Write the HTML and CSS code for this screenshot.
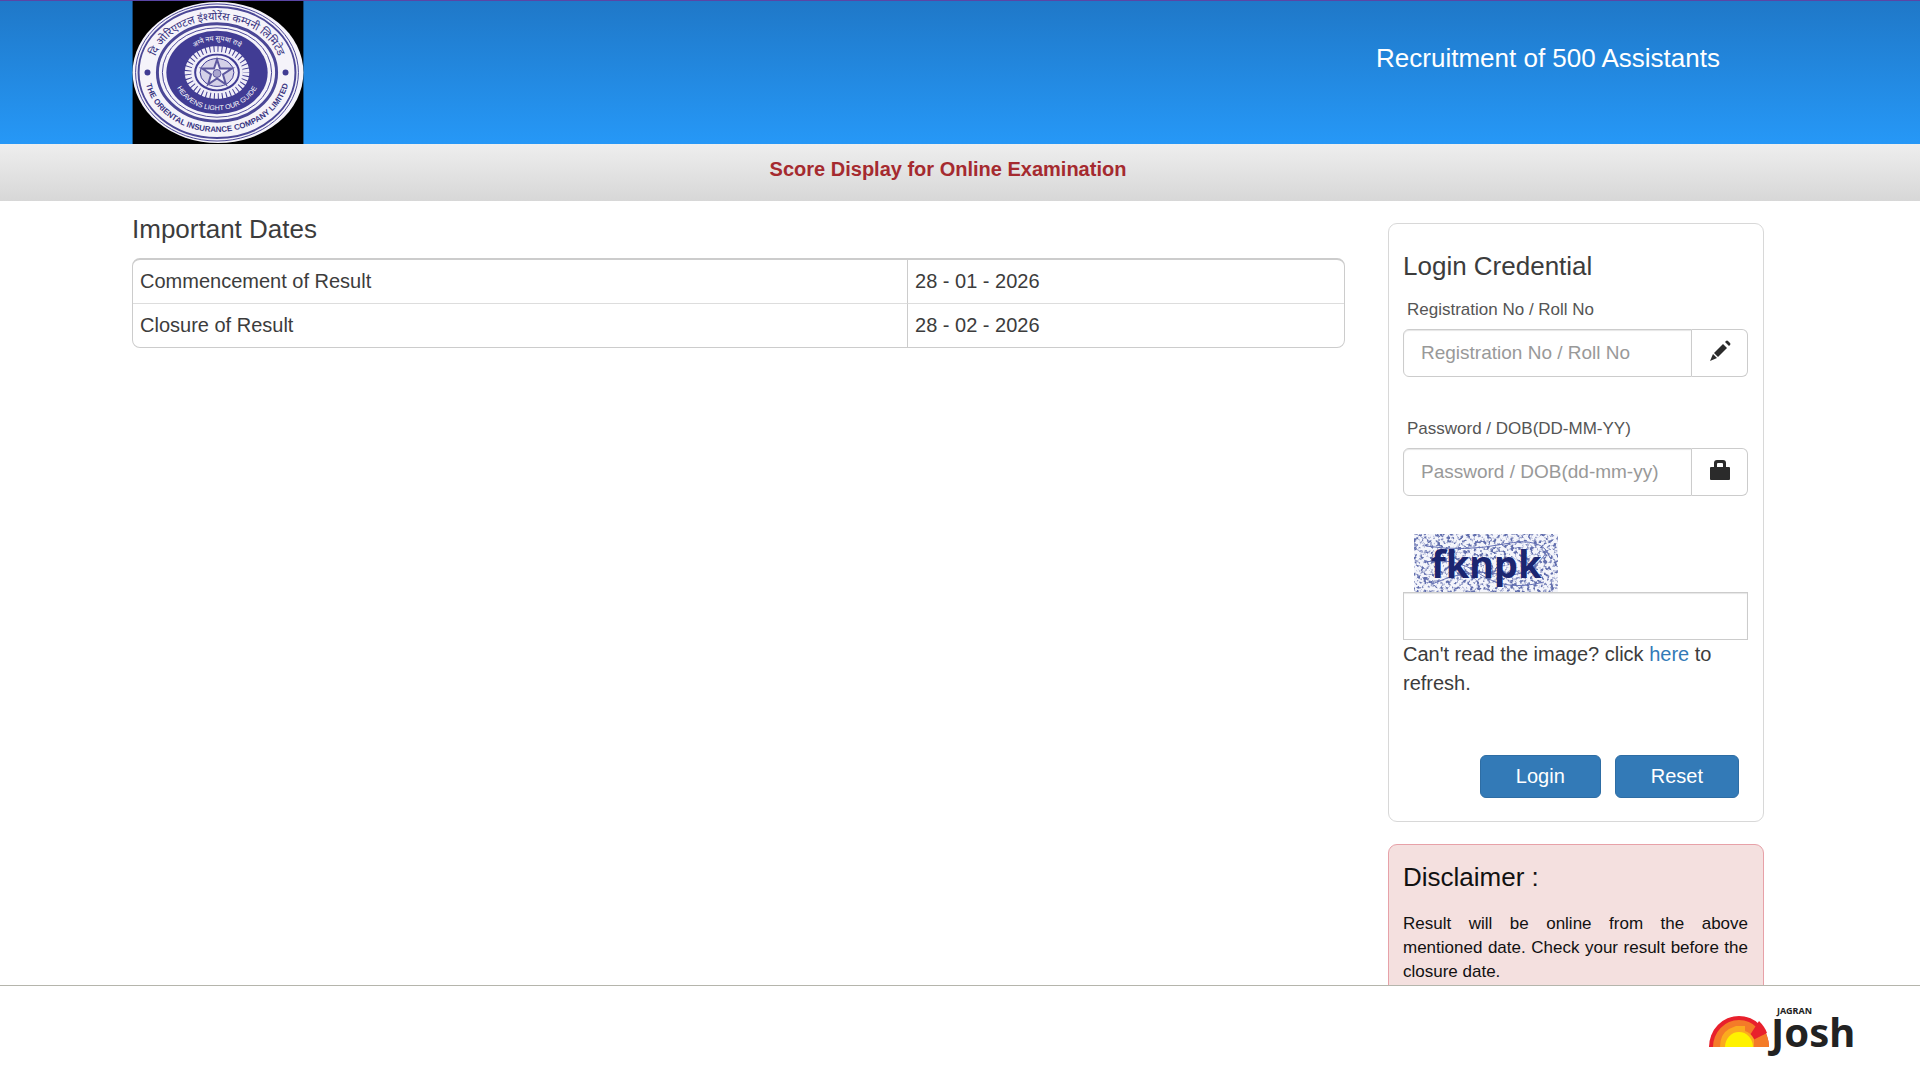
FILE: index.html
```
<!DOCTYPE html>
<html lang="en">

<head>
    <meta charset="utf-8">
    <title>Score Display for Online Examination</title>
    <link rel="stylesheet" href="styles.css">
</head>

<body>
    <header class="banner">
        <svg class="emblem" viewBox="0 0 172 144" role="img" aria-label="The Oriental Insurance Company Limited">
            <defs>
                <path id="arc-hindi" d="M20 72 A65 53 0 0 1 150 72" />
                <path id="arc-name" d="M12 72 A73 60 0 0 0 158 72" />
                <path id="arc-motto" d="M48 72 A37 32 0 0 1 122 72" />
                <path id="arc-guide" d="M41 72 A44 38 0 0 0 129 72" />
            </defs>
            <rect width="172" height="144" fill="#000" />
            <ellipse cx="86" cy="72" rx="86" ry="71" fill="#f5f3fa" />
            <g fill="none" stroke="#4b4796">
                <ellipse cx="85" cy="72" rx="82" ry="69" stroke-width="1" />
                <ellipse cx="85" cy="72" rx="79" ry="66" stroke-width="2" />
                <ellipse cx="85" cy="72" rx="60" ry="49" stroke-width="3" />
                <ellipse cx="85" cy="72" rx="55" ry="45" stroke-width="1" />
            </g>
            <ellipse cx="85" cy="72" rx="51" ry="42" fill="#413c94" />
            <ellipse cx="85" cy="72" rx="29" ry="23" fill="none" stroke="#f0eef8" stroke-width="7" stroke-dasharray="3 1" />
            <ellipse cx="85" cy="72" rx="26" ry="21" fill="#f0eef8" />
            <ellipse cx="85" cy="72" rx="22" ry="18" fill="none" stroke="#413c94" stroke-width="2" />
            <ellipse cx="85" cy="72" rx="17" ry="14" fill="#d5d1e8" stroke="#413c94" />
            <path d="M85 59 L88 68 L100 68 L91 74 L94 84 L85 78 L76 84 L79 74 L70 68 L82 68 Z" fill="#f0eef8" stroke="#5d589f" stroke-width="2" />
            <circle cx="85" cy="73" r="4" fill="#aaa6cf" stroke="#5d589f" />
            <circle cx="15" cy="72" r="3" fill="#413c94" />
            <circle cx="154" cy="72" r="3" fill="#413c94" />
            <text class="seal-hindi"><textPath href="#arc-hindi" startOffset="50%">दि ओरिएण्टल इंश्योरेंस कम्पनी लिमिटेड</textPath></text>
            <text class="seal-name"><textPath href="#arc-name" startOffset="50%">THE ORIENTAL INSURANCE COMPANY LIMITED</textPath></text>
            <text class="seal-motto"><textPath href="#arc-motto" startOffset="50%">अग्ने नय सुपथा राये</textPath></text>
            <text class="seal-guide"><textPath href="#arc-guide" startOffset="50%">HEAVENS LIGHT OUR GUIDE</textPath></text>
        </svg>
        <h1>Recruitment of 500 Assistants</h1>
    </header>
    <div class="sub-banner">Score Display for Online Examination</div>

    <main class="content">
        <section class="dates">
            <h2>Important Dates</h2>
            <table>
                <tr>
                    <td>Commencement of Result</td>
                    <td>28 - 01 - 2026</td>
                </tr>
                <tr>
                    <td>Closure of Result</td>
                    <td>28 - 02 - 2026</td>
                </tr>
            </table>
        </section>

        <aside class="sidebar">
            <form class="panel">
                <h2>Login Credential</h2>
                <div class="form-group">
                    <label for="regno">Registration No / Roll No</label>
                    <div class="input-group">
                        <input type="text" id="regno" placeholder="Registration No / Roll No">
                        <span class="addon">
                            <svg width="22" height="22" viewBox="0 0 22 22" fill="#2b2b2b">
                                <path d="M16 2 L17 1 Q18 0 19 1 L21 3 Q22 4 21 5 L20 6 Z" />
                                <path d="M14 4 L18 8 L9 17 L5 13 Z" />
                                <path d="M4 14 L8 18 L1 21 Z" />
                            </svg>
                        </span>
                    </div>
                </div>
                <div class="form-group">
                    <label for="password">Password / DOB(DD-MM-YY)</label>
                    <div class="input-group">
                        <input type="password" id="password" placeholder="Password / DOB(dd-mm-yy)">
                        <span class="addon">
                            <svg width="20" height="22" viewBox="0 0 20 22" fill="#2b2b2b">
                                <path fill-rule="evenodd" d="M4 8 V4 Q4 1 7 1 H13 Q16 1 16 4 V8 H19 Q20 8 20 9 V20 Q20 21 19 21 H1 Q0 21 0 20 V9 Q0 8 1 8 Z M7 8 H13 V5 Q13 4 12 4 H8 Q7 4 7 5 Z" />
                            </svg>
                        </span>
                    </div>
                </div>
                <svg class="captcha" width="144" height="58" viewBox="0 0 144 58">
                    <defs>
                        <filter id="speckle" x="0" y="0" width="100%" height="100%" color-interpolation-filters="sRGB">
                            <feTurbulence type="fractalNoise" baseFrequency="0.3" numOctaves="2" seed="7" />
                            <feColorMatrix values="0 0 0 0 0.38  0 0 0 0 0.43  0 0 0 0 0.68  5 0 0 0 -2.4" />
                        </filter>
                    </defs>
                    <rect width="144" height="58" fill="#f4f5fb" />
                    <rect width="144" height="58" filter="url(#speckle)" />
                    <g fill="none" stroke="#6470b4" stroke-width="1">
                        <path d="M12 12 Q50 18 90 10 T136 24" />
                        <path d="M10 28 Q40 22 66 40 T130 48" />
                        <path d="M18 50 Q52 34 84 40 T134 16" />
                    </g>
                    <text x="17" y="44">fknpk</text>
                </svg>
                <input type="text" class="captcha-input" id="captcha" aria-label="Captcha">
                <p class="refresh">Can't read the image? click <a href="#">here</a> to refresh.</p>
                <div class="buttons">
                    <button type="submit">Login</button>
                    <button type="reset">Reset</button>
                </div>
            </form>

            <div class="panel disclaimer">
                <h2>Disclaimer :</h2>
                <p>Result will be online from the above mentioned date. Check your result before the closure date.</p>
            </div>
        </aside>
    </main>

    <footer class="footer">
        <svg width="148" height="56" viewBox="0 0 148 56" role="img" aria-label="Jagran Josh">
            <path d="M1 43 A30 31 0 0 1 61 43 Z" fill="#e8202c" />
            <path d="M5 43 A26 27 0 0 1 57 43 Z" fill="#f47b28" />
            <path d="M31 43 L58 29 Q61 37 61 43 Z" fill="#f47b28" />
            <path d="M42 31 L51 17 Q57 23 59 29 L45 36 Z" fill="#e8202c" />
            <path d="M12 43 Q12 30 21 25 L28 22 L37 22 L37 27 Q43 29 46 35 L46 43 Z" fill="#fbab1f" />
            <path d="M17 43 A14 15 0 0 1 45 43 Z" fill="#fff200" />
            <text class="logo-small" x="69" y="10">JAGRAN</text>
            <text class="logo-big" x="63" y="43">Josh</text>
        </svg>
    </footer>
</body>

</html>
```
FILE: styles.css
```
* {
    box-sizing: border-box;
}

body {
    display: flex;
    flex-direction: column;
    height: 100vh;
    margin: 0;
    font-family: "Liberation Sans", Arial, sans-serif;
    font-size: 20px;
    line-height: 29px;
    color: #3c3c3c;
    background: #fff;
}

h1,
h2 {
    margin: 0;
    font-size: 26px;
    font-weight: normal;
    line-height: 30px;
}

.banner {
    display: flex;
    justify-content: space-between;
    flex-shrink: 0;
    padding: 0 200px 0 132px;
    border-top: 1px solid #5a45a5;
    background: linear-gradient(#1f78c8, #2698f7);
}

.banner h1 {
    padding-top: 42px;
    color: #fff;
}

.emblem {
    display: block;
    width: 172px;
    height: 143px;
}

.emblem text {
    text-anchor: middle;
    font-weight: bold;
    fill: #37327f;
}

.emblem .seal-hindi {
    font-family: "Noto Sans Devanagari", "Noto Sans", sans-serif;
    font-size: 11px;
    font-weight: normal;
}

.emblem .seal-name {
    font-family: "Liberation Sans Narrow", "Liberation Sans", sans-serif;
    font-size: 8px;
}

.emblem .seal-motto {
    font-family: "Noto Sans Devanagari", "Noto Sans", sans-serif;
    font-size: 7px;
    font-weight: normal;
    fill: #fff;
}

.emblem .seal-guide {
    font-family: "Liberation Sans Narrow", "Liberation Sans", sans-serif;
    font-size: 7px;
    font-weight: normal;
    fill: #fff;
}

.sub-banner {
    flex-shrink: 0;
    height: 57px;
    padding: 11px 156px 0 132px;
    text-align: center;
    font-weight: bold;
    color: #a52a2f;
    background: linear-gradient(#eeeeee, #d7d7d7);
}

.content {
    display: flex;
    flex: 1;
    gap: 43px;
    min-height: 0;
    padding: 0 156px 0 132px;
    overflow: hidden;
}

.dates {
    flex: 1;
    padding-top: 13px;
}

.dates table {
    width: 100%;
    margin-top: 14px;
    border: 1px solid #ccc;
    border-top-width: 2px;
    border-radius: 8px;
    border-spacing: 0;
}

.dates td {
    padding: 7px;
}

.dates td:first-child {
    width: 64%;
    border-right: 1px solid #ccc;
}

.dates tr + tr td {
    border-top: 1px solid #ddd;
}

.sidebar {
    flex: 0 0 376px;
    padding-top: 22px;
}

.panel {
    padding: 27px 15px 23px 14px;
    border: 1px solid #d8d8d8;
    border-radius: 9px;
}

.form-group {
    margin-bottom: 38px;
}

.form-group label {
    display: block;
    padding: 17px 4px 7px;
    font-size: 17px;
    line-height: 24px;
    color: #555;
}

.input-group {
    display: flex;
}

input {
    width: 100%;
    height: 48px;
    padding: 0 17px;
    border: 1px solid #ccc;
    font-family: inherit;
    font-size: 19px;
    color: #555;
    background: #fff;
    box-shadow: inset 0 1px 1px rgba(0, 0, 0, 0.1);
}

input::placeholder {
    color: #999;
}

.input-group input {
    flex: 1;
    min-width: 0;
    border-radius: 6px 0 0 6px;
}

.form-group + .form-group label {
    padding-top: 2px;
}

.addon {
    display: flex;
    align-items: center;
    justify-content: center;
    width: 56px;
    padding-bottom: 5px;
    border: 1px solid #ccc;
    border-left: 0;
    border-radius: 0 6px 6px 0;
}

.captcha {
    display: block;
    margin-left: 11px;
}

.captcha text {
    font-family: "Noto Sans", sans-serif;
    font-size: 38px;
    font-weight: bold;
    fill: #1b2570;
}

.captcha-input {
    display: block;
}

.refresh {
    margin: 0 0 57px;
}

a {
    color: #337ab7;
    text-decoration: none;
}

.buttons {
    display: flex;
    justify-content: flex-end;
    gap: 14px;
    padding-right: 9px;
}

button {
    height: 43px;
    padding: 0 35px;
    border: 1px solid #2e6da4;
    border-radius: 6px;
    font-family: inherit;
    font-size: 20px;
    color: #fff;
    background: #337ab7;
    cursor: pointer;
}

.disclaimer {
    margin-top: 22px;
    padding-top: 17px;
    border-color: #e7a1a8;
    color: #111;
    background: #f4e0df;
}

.disclaimer p {
    margin: 20px 0 0;
    font-size: 17px;
    line-height: 24px;
    text-align: justify;
}

.footer {
    display: flex;
    flex-shrink: 0;
    justify-content: flex-end;
    height: 95px;
    padding: 18px 64px 0 0;
    border-top: 1px solid #b5b5ac;
    background: #fff;
}

.footer text {
    font-family: "Noto Sans", sans-serif;
    font-weight: bold;
    fill: #222;
}

.footer .logo-small {
    font-size: 9px;
}

.footer .logo-big {
    font-size: 40px;
}
```
